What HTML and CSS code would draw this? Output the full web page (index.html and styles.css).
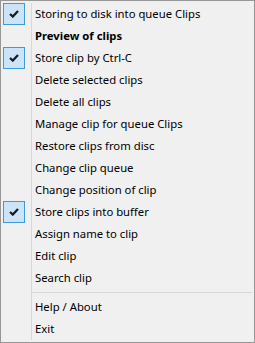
FILE: index.html
```html
<!DOCTYPE html>
<html lang="en">
<head>
<meta charset="utf-8">
<title>Clips menu</title>
<link rel="stylesheet" href="styles.css">
</head>
<body>
<div class="menu">
	<div class="item checked"><span class="icon"><svg width="10" height="8" viewBox="0 0 10 8"><path d="M1 4 L3.8 6.6 L9 1" fill="none" stroke="#1a1a1a" stroke-width="2.2"/></svg></span><span class="label">Storing to disk into queue Clips</span></div>
	<div class="item bold"><span class="icon"></span><span class="label">Preview of clips</span></div>
	<div class="item checked"><span class="icon"><svg width="10" height="8" viewBox="0 0 10 8"><path d="M1 4 L3.8 6.6 L9 1" fill="none" stroke="#1a1a1a" stroke-width="2.2"/></svg></span><span class="label">Store clip by Ctrl-C</span></div>
	<div class="item"><span class="icon"></span><span class="label">Delete selected clips</span></div>
	<div class="item"><span class="icon"></span><span class="label">Delete all clips</span></div>
	<div class="item"><span class="icon"></span><span class="label">Manage clip for queue Clips</span></div>
	<div class="item"><span class="icon"></span><span class="label">Restore clips from disc</span></div>
	<div class="item"><span class="icon"></span><span class="label">Change clip queue</span></div>
	<div class="item"><span class="icon"></span><span class="label">Change position of clip</span></div>
	<div class="item checked"><span class="icon"><svg width="10" height="8" viewBox="0 0 10 8"><path d="M1 4 L3.8 6.6 L9 1" fill="none" stroke="#1a1a1a" stroke-width="2.2"/></svg></span><span class="label">Store clips into buffer</span></div>
	<div class="item"><span class="icon"></span><span class="label">Assign name to clip</span></div>
	<div class="item"><span class="icon"></span><span class="label">Edit clip</span></div>
	<div class="item"><span class="icon"></span><span class="label">Search clip</span></div>
	<div class="sep"><span class="icon"></span><span class="line"></span></div>
	<div class="item"><span class="icon"></span><span class="label">Help / About</span></div>
	<div class="item"><span class="icon"></span><span class="label">Exit</span></div>
</div>
</body>
</html>
```
FILE: styles.css
```css
body {
	margin: 0;
	font-family: "Noto Sans", "Open Sans", sans-serif;
	font-size: 11.3px;
	color: #000;
}

.menu {
	width: 253px;
	height: 341px;
	box-sizing: content-box;
	border: 1px solid #979797;
	background: #f0f0f0;
	padding: 0;
}

.menu .item, .menu .sep {
	display: flex;
	margin-left: 2px;
	margin-right: 2px;
}
.menu .item:first-child { margin-top: 2px; }

.item { height: 22px; }
.sep { height: 7px; }

.icon {
	width: 22px;
	flex: none;
	margin-right: 6px;
	display: flex;
	align-items: center;
	justify-content: center;
	box-sizing: border-box;
}
.checked .icon {
	background: #cce4f7;
	border: 1px solid #3d9bd9;
}

.label {
	flex: 1;
	border-left: 1px solid #d7d7d7;
	padding-left: 3px;
	line-height: 22px;
	white-space: nowrap;
}
.bold .label { font-weight: bold; }

.sep .line {
	flex: 1;
	border-left: 1px solid #d7d7d7;
	background: linear-gradient(#f0f0f0 3px, #d7d7d7 3px, #d7d7d7 4px, #f0f0f0 4px);
}
```
